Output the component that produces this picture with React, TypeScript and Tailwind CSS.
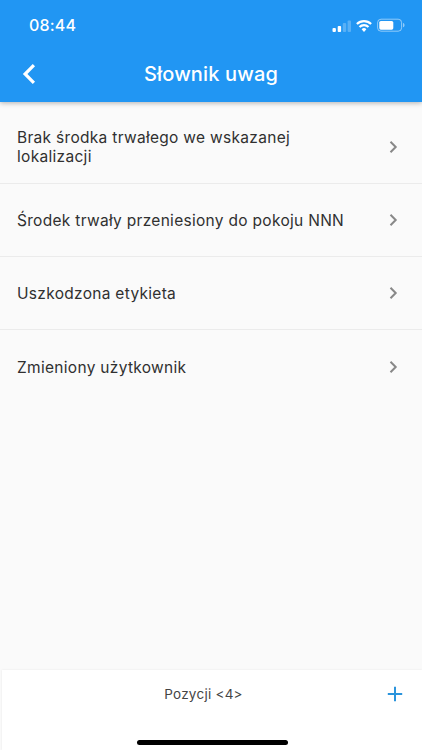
const notes = [
  'Brak środka trwałego we wskazanej lokalizacji',
  'Środek trwały przeniesiony do pokoju NNN',
  'Uszkodzona etykieta',
  'Zmieniony użytkownik',
];

function StatusBar() {
  return (
    <div className="flex h-[46px] items-start justify-between pt-[14px] pr-[17px] pl-[29px]">
      <span className="text-[16px] leading-[22px] font-medium tracking-[0.2px]">08:44</span>
      <div className="flex h-[22px] items-center gap-[5px]">
        <svg width="19" height="13" viewBox="0 0 19 13" fill="currentColor">
          <rect x="0.5" y="9" width="3.4" height="4" rx="1" />
          <rect x="5.7" y="7" width="3.4" height="6" rx="1" />
          <rect x="10.8" y="4" width="3.4" height="9" rx="1" opacity="0.25" />
          <rect x="15.6" y="1.4" width="3.4" height="11.6" rx="1" opacity="0.25" />
        </svg>
        <svg width="16" height="13" viewBox="0 0 16 13" fill="none" stroke="currentColor" strokeWidth="2.2">
          <path d="M0.9 5a10.2 10.2 0 0 1 14.2 0" />
          <path d="M3.5 8a6.4 6.4 0 0 1 9 0" />
          <path d="M5.6 10.300a3.400 3.400 0 0 1 4.800 0L8 12.900z" fill="currentColor" stroke="none" />
        </svg>
        <svg width="28" height="14" viewBox="0 0 28 14" fill="currentColor">
          <rect x="0.6" y="1.200" width="24" height="12" rx="3.4" fill="none" stroke="currentColor" opacity="0.5" />
          <rect x="2.3" y="2.900" width="14" height="8.800" rx="1.6" />
          <path d="M26 5.100v4.200c1-.4 1.500-1.200 1.500-2.100S27 5.500 26 5.100z" opacity="0.5" />
        </svg>
      </div>
    </div>
  );
}

export default function App() {
  return (
    <div className="flex h-[750px] w-[422px] flex-col overflow-hidden bg-[#fafafa] font-['Inter',sans-serif] text-[#303030]">
      <header className="relative h-[102px] shrink-0 bg-[#2196f3] text-white shadow-[0_1px_5px_rgba(0,0,0,0.3)]">
        <StatusBar />
        <div className="grid h-14 grid-cols-[56px_1fr_56px] items-center">
          <button aria-label="Wstecz" className="pl-[22px]">
            <svg width="14" height="20" viewBox="0 0 14 20" fill="none" stroke="currentColor" strokeWidth="3.2">
              <path d="M11.900 1.200L3.100 10l8.800 8.800" />
            </svg>
          </button>
          <h1 className="text-center text-[20px] leading-6 font-medium tracking-[0.15px]">Słownik uwag</h1>
        </div>
      </header>

      <ul className="flex-1 pt-[8.5px]">
        {notes.map((note) => (
          <li
            key={note}
            className="flex h-[73.3px] items-center justify-between border-b border-[#ebebeb] pr-[24px] pl-[17px] last:border-b-0"
          >
            <span className="w-[340px] pt-[0.5px] text-[15.5px] leading-[19px] tracking-[0.3px]">{note}</span>
            <svg width="9" height="14" viewBox="0 0 9 14" fill="none" stroke="#888888" strokeWidth="2">
              <path d="M1.500 1.800L6.700 7l-5.200 5.200" />
            </svg>
          </li>
        ))}
      </ul>

      <footer className="ml-[2px] flex h-[80px] shrink-0 flex-col bg-white shadow-[0_0_2px_rgba(0,0,0,0.08)]">
        <div className="grid h-[48px] grid-cols-[39px_1fr_56px] items-center">
          <span className="col-start-2 text-center text-[13.5px] leading-[18px] tracking-[0.25px] text-[#444444]">
            Pozycji &lt;4&gt;
          </span>
          <button aria-label="Dodaj" className="flex justify-center pl-px text-[#2b94dc]">
            <svg width="16" height="16" viewBox="0 0 16 16" fill="none" stroke="currentColor" strokeWidth="2">
              <path d="M8 .800v14.400M.800 8h14.400" />
            </svg>
          </button>
        </div>
        <div className="mt-[22px] ml-[135px] h-[5px] w-[151px] rounded-full bg-black" />
      </footer>
    </div>
  );
}
